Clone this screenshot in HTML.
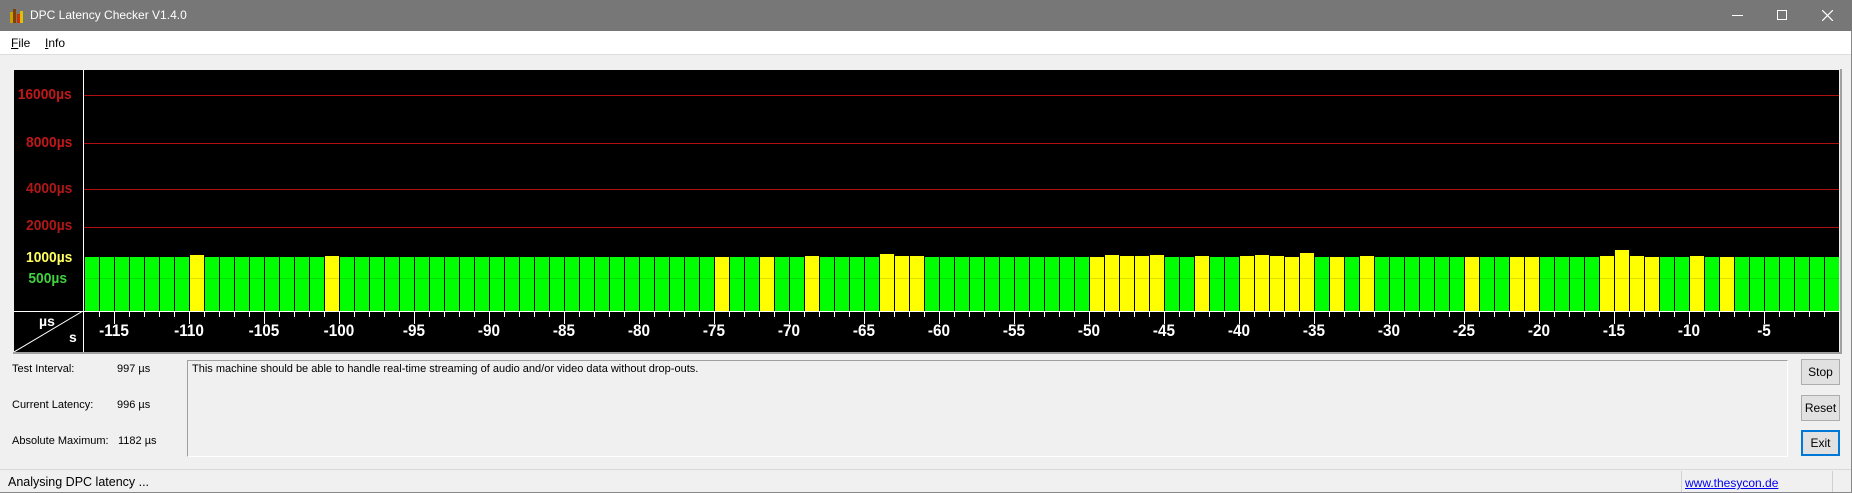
<!DOCTYPE html>
<html><head><meta charset="utf-8"><style>
*{margin:0;padding:0;box-sizing:border-box}
body{width:1852px;height:493px;background:#f0f0f0;font-family:"Liberation Sans",sans-serif;font-size:12px;position:relative;overflow:hidden;color:#000}
.abs{position:absolute}
#title{left:0;top:0;width:1852px;height:31px;background:#777}
#menu{left:0;top:31px;width:1852px;height:24px;background:#fff;border-bottom:1px solid #ddd}
#chart{left:14px;top:70px;width:1825px;height:282px;background:#000}
.yl{position:absolute;right:1767px;font:bold 15px "Liberation Sans",sans-serif;transform:scaleX(0.92);transform-origin:right}
.rl{position:absolute;left:70px;width:1755px;height:1px;background:#b01010}
.xl{position:absolute;top:251px;color:#fff;font:bold 17px "Liberation Sans",sans-serif;width:60px;text-align:center;transform:scaleX(0.9)}
.btn{position:absolute;left:1801px;width:39px;height:26px;background:#e1e1e1;border:1px solid #adadad;text-align:center;line-height:24px;font-size:12px}
.lb{font-size:11px}
</style></head><body>
<div id="title" class="abs">
 <svg class="abs" style="left:10px;top:9px" width="14" height="14"><rect x="0" y="3" width="3" height="11" fill="#c8a000"/><rect x="3" y="0" width="3" height="14" fill="#804000"/><rect x="7" y="5" width="3" height="9" fill="#d03000"/><rect x="10" y="2" width="3" height="12" fill="#e0c000"/></svg>
 <div class="abs" style="left:30px;top:8px;color:#fff;font-size:12px">DPC Latency Checker V1.4.0</div>
 <div class="abs" style="left:1732px;top:15px;width:11px;height:1px;background:#fff"></div>
 <div class="abs" style="left:1777px;top:10px;width:10px;height:10px;border:1px solid #fff"></div>
 <svg class="abs" style="left:1822px;top:10px" width="11" height="11"><path d="M0 0L11 11M11 0L0 11" stroke="#fff" stroke-width="1.2"/></svg>
</div>
<div id="menu" class="abs">
 <div class="abs" style="left:11px;top:5px"><u>F</u>ile</div>
 <div class="abs" style="left:45px;top:5px"><u>I</u>nfo</div>
</div>
<div class="abs" style="left:1840px;top:69px;width:2px;height:285px;background:#a0a0a0"></div>
<div class="abs" style="left:13px;top:352px;width:1828px;height:2px;background:#a0a0a0"></div>
<div id="chart" class="abs">
 <div class="abs" style="left:69px;top:0;width:1px;height:282px;background:#fff"></div>
 <div class="abs" style="left:0;top:241px;width:1825px;height:1px;background:#fff"></div>
 <div class="rl" style="top:25px"></div>
 <div class="rl" style="top:73px"></div>
 <div class="rl" style="top:119px"></div>
 <div class="rl" style="top:157px"></div>
 <div class="yl" style="top:16px;color:#c01818">16000µs</div>
 <div class="yl" style="top:64px;color:#c01818">8000µs</div>
 <div class="yl" style="top:110px;color:#b01818">4000µs</div>
 <div class="yl" style="top:147px;color:#b01818">2000µs</div>
 <div class="yl" style="top:179px;color:#ffff60">1000µs</div>
 <div class="yl" style="top:200px;right:1772px;color:#40d040">500µs</div>
 <svg class="abs" style="left:0;top:241px" width="70" height="41"><path d="M0 41L69 0" stroke="#fff" stroke-width="1"/></svg>
 <div class="abs" style="left:25px;top:243px;color:#fff;font:bold 14px 'Liberation Sans',sans-serif">µs</div>
 <div class="abs" style="left:55px;top:259px;color:#fff;font:bold 14px 'Liberation Sans',sans-serif">s</div>
 <div id="bars"></div>
</div>
<div class="abs lb" style="left:12px;top:363px">Test Interval:</div>
<div class="abs lb" style="left:117px;top:363px">997 µs</div>
<div class="abs lb" style="left:12px;top:399px">Current Latency:</div>
<div class="abs lb" style="left:117px;top:399px">996 µs</div>
<div class="abs lb" style="left:12px;top:435px">Absolute Maximum:</div>
<div class="abs lb" style="left:118px;top:435px">1182 µs</div>
<div class="abs" style="left:187px;top:360px;width:1601px;height:97px;border:1px solid #a0a0a0;border-right-color:#fff;border-bottom-color:#fff;padding:2px 4px;font-size:11px">This machine should be able to handle real-time streaming of audio and/or video data without drop-outs.</div>
<div class="btn" style="top:359px">Stop</div>
<div class="btn" style="top:395px">Reset</div>
<div class="btn" style="top:430px;border:2px solid #0078d7;line-height:22px">Exit</div>
<div class="abs" style="left:0;top:469px;width:1852px;height:1px;background:#d8d8d8"></div>
<div class="abs" style="left:8px;top:475px;font-size:12.5px">Analysing DPC latency ...</div>
<div class="abs" style="left:1681px;top:471px;width:1px;height:22px;background:#d0d0d0"></div>
<div class="abs" style="left:1832px;top:471px;width:1px;height:22px;background:#d0d0d0"></div>
<div class="abs" style="left:1685px;top:476px;color:#0000ee;text-decoration:underline;font-size:12px">www.thesycon.de</div>
<div class="abs" style="left:1851px;top:31px;width:1px;height:462px;background:#888"></div>
<div class="abs" style="left:0;top:492px;width:1852px;height:1px;background:#888"></div>
<script>
var y={7:255,16:256,42:257,45:257,48:256,53:254,54:256,55:256,67:257,68:255,69:256,70:256,71:255,74:256,77:256,78:255,79:256,80:257,81:253,83:257,85:256,92:257,95:257,96:257,101:256,102:250,103:256,104:257,107:256,109:257};
var h='';
for(var i=0;i<117;i++){var x=84+15*i-14;var t=(y[i]||257)-70;var c=y[i]?'#ffff00':'#00ff00';
h+='<div class="abs" style="left:'+(x+1)+'px;top:'+t+'px;width:14px;height:'+(241-t)+'px;background:'+c+'"></div>';
h+='<div class="abs" style="left:'+(x+1)+'px;top:208px;width:14px;height:1px;background:rgba(0,0,0,0.12)"></div>';}
for(var k=1;k<117;k++){var x=84+15*k-14;var maj=(k-117)%5==0;
h+='<div class="abs" style="left:'+x+'px;top:242px;width:1px;height:'+(maj?12:5)+'px;background:#fff"></div>';
if(maj)h+='<div class="xl" style="left:'+(x-30)+'px">'+(k-117)+'</div>';}
document.getElementById('bars').innerHTML=h;
</script>
</body></html>
